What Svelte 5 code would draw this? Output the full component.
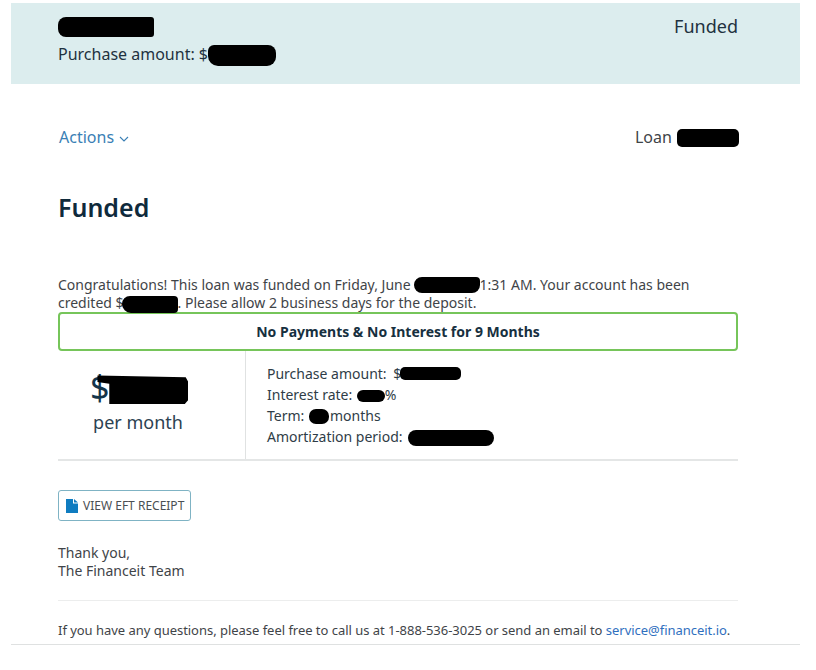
<script>
	const terms = [
		{ label: 'Purchase amount:', value: '$', blot: 'blot-purchase' },
		{ label: 'Interest rate:', blot: 'blot-rate', after: '%' },
		{ label: 'Term:', blot: 'blot-term', after: 'months' },
		{ label: 'Amortization period:', blot: 'blot-amort' }
	];
</script>

<div class="page">
	<header class="banner">
		<div class="banner-left">
			<span class="blot blot-name"></span>
			<div class="banner-amount">Purchase amount: $<span class="blot blot-amount"></span></div>
		</div>
		<div class="banner-status">Funded</div>
	</header>

	<main class="content">
		<div class="toolbar">
			<a class="actions" href="#actions">
				Actions
				<svg width="10" height="6" viewBox="0 0 10 6" aria-hidden="true">
					<path d="M1 1l4 4 4-4" fill="none" stroke="currentColor" stroke-width="1.1" />
				</svg>
			</a>
			<div class="loan">Loan <span class="blot blot-loan"></span></div>
		</div>

		<h1>Funded</h1>

		<p class="message">
			Congratulations! This loan was funded on Friday, June<span class="blot blot-date"></span>1:31 AM. Your account has been<br />
			credited $<span class="blot blot-credit"></span>. Please allow 2 business days for the deposit.
		</p>

		<div class="promo">No Payments &amp; No Interest for 9 Months</div>

		<div class="summary">
			<div class="payment">
				<div class="payment-amount">$<span class="blot blot-payment"></span></div>
				<div class="payment-unit">per month</div>
			</div>
			<ul class="terms">
				{#each terms as term}
					<li>
						{term.label}
						{#if term.value}<span class="term-value">{term.value}</span>{/if}<span class="blot {term.blot}"></span>{#if term.after}{term.after}{/if}
					</li>
				{/each}
			</ul>
		</div>

		<a class="receipt" href="#receipt">
			<svg width="12" height="14" viewBox="0 0 12 14" aria-hidden="true">
				<path d="M0 0h7v4.500h5V14H0z" fill="#0f7cc0" />
				<path d="M8 0l4 3.500H8z" fill="#0f7cc0" />
			</svg>
			VIEW EFT RECEIPT
		</a>

		<p class="signoff">Thank you,<br />The Financeit Team</p>

		<hr />

		<p class="contact">
			If you have any questions, please feel free to call us at 1-888-536-3025 or send an email to
			<a href="mailto:service@financeit.io">service@financeit.io</a>.
		</p>
	</main>
	<div class="page-end"></div>
</div>

<style>
	:global(body) {
		background: #fff;
	}

	.page {
		width: 800px;
		padding-top: 3px;
		font-family: "Noto Sans", "Open Sans", sans-serif;
		font-size: 14px;
		line-height: 19px;
		color: #3f4448;
	}

	.banner {
		margin-left: 11px;
		height: 81px;
		box-sizing: border-box;
		padding: 12px 62px 0 47px;
		display: flex;
		justify-content: space-between;
		background: #dcedee;
		color: #1f3240;
		font-size: 16px;
		line-height: 22px;
	}

	.banner-left {
		display: flex;
		flex-direction: column;
		gap: 6px;
	}

	.banner-status {
		font-size: 18px;
	}

	.blot {
		display: inline-block;
		background: #000;
		border-radius: 5px;
	}

	.blot-name {
		width: 96px;
		height: 20px;
		margin-top: 2px;
		border-radius: 8px 3px 3px 8px;
	}

	.blot-amount {
		width: 68px;
		height: 21px;
		vertical-align: -6px;
		border-radius: 6px 8px 9px 10px;
	}

	.content {
		margin-left: 58px;
		width: 680px;
	}

	.toolbar {
		margin-top: 42px;
		display: flex;
		justify-content: space-between;
		align-items: center;
		font-size: 16px;
		line-height: 22px;
	}

	.actions {
		margin-left: 1px;
		color: #3a7fb5;
		text-decoration: none;
	}

	.actions svg {
		margin-left: 1px;
		vertical-align: 1px;
	}

	.blot-loan {
		width: 62px;
		height: 18px;
		vertical-align: -4px;
		margin: 0 -1px 0 1px;
	}

	h1 {
		margin: 41px 0 0;
		font-size: 25px;
		line-height: 36px;
		font-weight: 600;
		color: #0f2a3c;
	}

	.message {
		margin: 51px 0 0;
		line-height: 18px;
	}

	.blot-date {
		width: 66px;
		height: 16px;
		vertical-align: -3px;
		margin-left: 3px;
		border-radius: 8px 4px 8px 8px;
	}

	.blot-credit {
		width: 56px;
		height: 17px;
		vertical-align: -5px;
		margin-left: -2px;
		border-radius: 8px 4px 4px 9px;
	}

	.promo {
		margin-top: -1px;
		height: 39px;
		box-sizing: border-box;
		border: 2px solid #76c55a;
		border-radius: 4px;
		display: flex;
		align-items: center;
		justify-content: center;
		font-weight: 700;
		color: #17303f;
	}

	.summary {
		display: flex;
		height: 110px;
		border-bottom: 2px solid #e4e6e6;
		box-sizing: border-box;
	}

	.payment {
		width: 188px;
		border-right: 1px solid #e0e2e2;
		padding: 18px 27px 0 0;
		box-sizing: border-box;
		text-align: center;
		color: #14344a;
	}

	.payment-amount {
		font-size: 34px;
		line-height: 36px;
		text-align: left;
		padding-left: 32px;
		white-space: nowrap;
	}

	.blot-payment {
		width: 91px;
		height: 29px;
		margin-left: -12px;
		vertical-align: -4px;
		border-radius: 0;
		clip-path: polygon(0 2%, 97% 8%, 100% 25%, 100% 85%, 96% 100%, 13% 100%, 13% 30%, 0 24%);
	}

	.payment-unit {
		margin-top: 5px;
		font-size: 18px;
		line-height: 24px;
		color: #2c4252;
	}

	.terms {
		list-style: none;
		margin: 0;
		padding: 12px 0 0 21px;
		line-height: 21px;
		color: #2f3d47;
	}

	.terms li {
		white-space: nowrap;
	}

	.term-value {
		margin-left: 3px;
	}

	.blot-purchase {
		width: 61px;
		height: 13px;
		margin-left: -1px;
		vertical-align: -1px;
	}

	.blot-rate {
		width: 28px;
		height: 12px;
		margin-left: 1px;
		vertical-align: -2px;
		border-radius: 6px;
	}

	.blot-term {
		width: 20px;
		height: 15px;
		margin: 0 1px;
		vertical-align: -3px;
		border-radius: 7px;
	}

	.blot-amort {
		width: 86px;
		height: 16px;
		margin-left: 2px;
		vertical-align: -4px;
		border-radius: 8px;
	}

	.receipt {
		margin-top: 29px;
		width: 133px;
		height: 31px;
		box-sizing: border-box;
		border: 1px solid #7fb3c4;
		border-radius: 3px;
		display: flex;
		align-items: center;
		gap: 5px;
		padding-left: 7px;
		font-size: 12px;
		color: #4a4f53;
		text-decoration: none;
		white-space: nowrap;
	}

	.signoff {
		margin: 23px 0 0;
		line-height: 18px;
	}

	hr {
		margin: 20px 0 0;
		border: 0;
		border-top: 1px solid #eceded;
	}

	.contact {
		margin: 20px 0 0;
		font-size: 13px;
		line-height: 18px;
		letter-spacing: -0.03px;
		white-space: nowrap;
	}

	.contact a {
		color: #2f6fbe;
		text-decoration: none;
	}

	.page-end {
		margin: 5px 0 0 11px;
		border-top: 1px solid #dfe1e1;
	}
</style>
